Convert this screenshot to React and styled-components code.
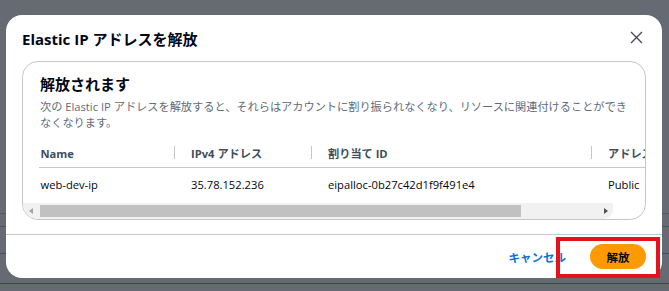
import React from 'react';
import styled, { createGlobalStyle } from 'styled-components';

const GlobalStyle = createGlobalStyle`
  html, body { margin: 0; padding: 0; background: #656a73; }
  body { font-family: "Open Sans", "Noto Sans CJK JP", sans-serif; }
  * { box-sizing: border-box; }
`;

const Backdrop = styled.div`
  width: 669px;
  height: 291px;
  padding: 15px 7px 0 6px;
  background-color: #656a73;
  background-image:
    linear-gradient(#555a63, #555a63),
    linear-gradient(#50555e, #50555e),
    linear-gradient(#3f4d6c, #3f4d6c),
    linear-gradient(#33456b, #33456b);
  background-size: 100% 1px;
  background-repeat: no-repeat;
  background-position: 0 213px, 0 226px, 0 253px, 0 283px;
  overflow: hidden;
`;

const Modal = styled.div`
  width: 656px;
  height: 263px;
  background: #ffffff;
  border-radius: 16px;
  display: flex;
  flex-direction: column;
  color: #000716;
`;

const ModalHeader = styled.div`
  display: flex;
  justify-content: space-between;
  align-items: flex-start;
  padding: 13px 16px 0 16px;
`;

const Title = styled.h2`
  margin: 0;
  font-size: 15px;
  line-height: 22px;
  font-weight: 700;
  color: #000716;
`;

const CloseButton = styled.button`
  width: 16px;
  height: 16px;
  margin: 1px 2px 0 0;
  padding: 0;
  border: none;
  background: none;
  display: flex;
  align-items: center;
  justify-content: center;
  color: #414d5c;
`;

const ModalBody = styled.div`
  padding: 11px 16px 0 16px;
`;

const Container = styled.div`
  border: 1px solid #c6c6cd;
  border-radius: 16px;
  overflow: hidden;
`;

const ContainerHeader = styled.div`
  padding: 12px 17px 0 17px;
`;

const Heading = styled.h3`
  margin: 0;
  font-size: 15px;
  line-height: 20px;
  font-weight: 700;
  color: #000716;
`;

const Description = styled.p`
  margin: 5px 0 0 0;
  font-size: 11.2px;
  line-height: 16px;
  color: #5f6b7a;
`;

const TableViewport = styled.div`
  margin-top: 8px;
  padding-left: 16px;
  overflow: hidden;
`;

const Row = styled.div`
  display: grid;
  grid-template-columns: 135px 137px 280px 150px;
  width: 702px;
  height: ${(p) => (p.$head ? '29px' : '33px')};
  border-bottom: ${(p) => (p.$head ? '1px solid #c6c6cd' : 'none')};
`;

const Cell = styled.div`
  position: relative;
  display: flex;
  align-items: center;
  padding-left: ${(p) => (p.$first ? '1.5px' : '17px')};
  font-size: 11.2px;
  font-weight: ${(p) => (p.$head ? 700 : 400)};
  color: ${(p) => (p.$head ? '#414d5c' : '#000716')};
  white-space: nowrap;

  ${(p) =>
    p.$head && !p.$first
      ? `&::before {
          content: '';
          position: absolute;
          left: 0;
          top: 7px;
          width: 1px;
          height: 13px;
          background: #c6c6cd;
        }`
      : ''}
`;

const ScrollBar = styled.div`
  display: flex;
  align-items: flex-start;
  height: 16px;
  margin: 2px 32px 0 0;
  background: #f1f1f1;
  border-bottom-right-radius: 10px;
`;

const ScrollArrow = styled.span`
  flex: none;
  width: 15px;
  height: 16px;
  display: flex;
  align-items: center;
  justify-content: center;

  &::before {
    content: '';
    width: 0;
    height: 0;
    border-style: solid;
    border-width: ${(p) => (p.$dir === 'left' ? '3.5px 4px 3.5px 0' : '3.5px 0 3.5px 4px')};
    border-color: ${(p) =>
      p.$dir === 'left'
        ? 'transparent #a3a3a3 transparent transparent'
        : 'transparent transparent transparent #505050'};
  }
`;

const ScrollThumb = styled.span`
  flex: none;
  width: 481px;
  height: 12px;
  margin: 2px 0 0 2px;
  background: #c1c1c1;
`;

const Spacer = styled.span`
  flex: 1;
`;

const Footer = styled.div`
  margin-top: 14px;
  border-top: 1px solid #c6c6cd;
  height: 44px;
  display: flex;
  justify-content: flex-end;
  align-items: center;
  gap: 24px;
  padding: 0 16px 0 0;
`;

const LinkButton = styled.button`
  border: none;
  background: none;
  padding: 0;
  font-family: inherit;
  font-size: 11.5px;
  font-weight: 700;
  color: #0972d3;
`;

const ButtonWrap = styled.span`
  position: relative;
  display: inline-flex;
`;

const PrimaryButton = styled.button`
  height: 25px;
  padding: 0 16.5px;
  border: none;
  border-radius: 20px;
  background: #ff9900;
  font-family: inherit;
  font-size: 11.5px;
  font-weight: 700;
  color: #000716;
`;

const Highlight = styled.span`
  position: absolute;
  left: -34px;
  right: -14px;
  top: -7px;
  bottom: -9px;
  border: 4px solid #e3121c;
  pointer-events: none;
`;

const columns = ['Name', 'IPv4 アドレス', '割り当て ID', 'アドレスのタイプ'];
const rows = [['web-dev-ip', '35.78.152.236', 'eipalloc-0b27c42d1f9f491e4', 'Public']];

export default function App() {
  return (
    <>
      <GlobalStyle />
      <Backdrop>
        <Modal>
          <ModalHeader>
            <Title>Elastic IP アドレスを解放</Title>
            <CloseButton aria-label="閉じる">
              <svg width="13" height="13" viewBox="0 0 13 13">
                <path d="M1 1 L12 12 M12 1 L1 12" stroke="currentColor" strokeWidth="1.4" fill="none" />
              </svg>
            </CloseButton>
          </ModalHeader>
          <ModalBody>
            <Container>
              <ContainerHeader>
                <Heading>解放されます</Heading>
                <Description>
                  次の Elastic IP アドレスを解放すると、それらはアカウントに割り振られなくなり、リソースに関連付けることができなくなります。
                </Description>
              </ContainerHeader>
              <TableViewport>
                <Row $head>
                  {columns.map((c, i) => (
                    <Cell key={c} $head $first={i === 0}>
                      {c}
                    </Cell>
                  ))}
                </Row>
                {rows.map((r) => (
                  <Row key={r[0]}>
                    {r.map((v, i) => (
                      <Cell key={i} $first={i === 0}>
                        {v}
                      </Cell>
                    ))}
                  </Row>
                ))}
              </TableViewport>
              <ScrollBar>
                <ScrollArrow $dir="left" />
                <ScrollThumb />
                <Spacer />
                <ScrollArrow $dir="right" />
              </ScrollBar>
            </Container>
          </ModalBody>
          <Footer>
            <LinkButton>キャンセル</LinkButton>
            <ButtonWrap>
              <PrimaryButton>解放</PrimaryButton>
              <Highlight />
            </ButtonWrap>
          </Footer>
        </Modal>
      </Backdrop>
    </>
  );
}
